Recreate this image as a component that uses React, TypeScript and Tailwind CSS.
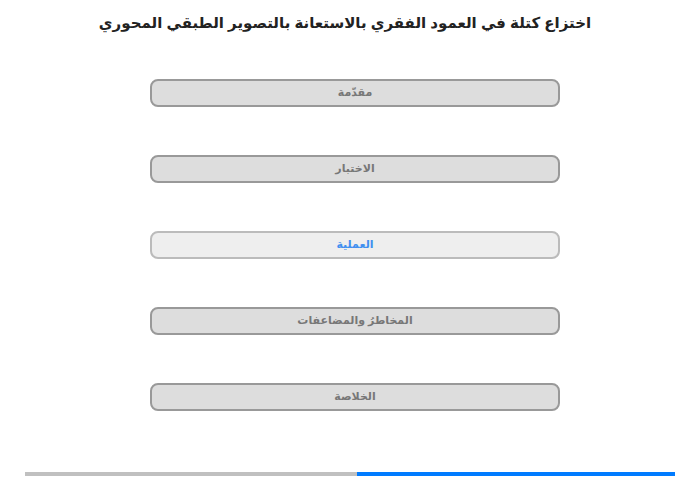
import React from "react";

const items = [
  { label: "مقدّمة", active: false },
  { label: "الاختبار", active: false },
  { label: "العملية", active: true },
  { label: "المخاطرُ والمضاعفات", active: false },
  { label: "الخلاصة", active: false },
];

export default function App() {
  return (
    <div dir="rtl" className="w-[700px] h-[480px] bg-white relative" style={{ fontFamily: '"Liberation Sans", Arial, "DejaVu Sans", sans-serif' }}>
      <h1 className="pt-[10px] pr-[10px] text-center text-[15px] leading-[26px] font-bold text-[#222]">
        اختزاع كتلة في العمود الفقري بالاستعانة بالتصوير الطبقي المحوري
      </h1>
      <div className="mt-[43px] flex flex-col gap-[48px] items-start pr-[140px]">
        {items.map((it) => (
          <div
            key={it.label}
            className={
              it.active
                ? "w-[410px] h-[28px] rounded-[8px] border-2 border-[#bbbbbb] bg-[#eeeeee] flex items-center justify-center pb-[1px] text-[11px] font-bold text-[#3f8ff0]"
                : "w-[410px] h-[28px] rounded-[8px] border-2 border-[#999999] bg-[#dddddd] flex items-center justify-center pb-[1px] text-[11px] font-bold text-[#777777]"
            }
          >
            {it.label}
          </div>
        ))}
      </div>
      <div dir="ltr" className="absolute left-[25px] top-[472px] w-[650px] h-[4px] flex">
        <div className="w-[332px] h-full bg-[#c0c0c0]" />
        <div className="flex-1 h-full bg-[#007bff]" />
      </div>
    </div>
  );
}
